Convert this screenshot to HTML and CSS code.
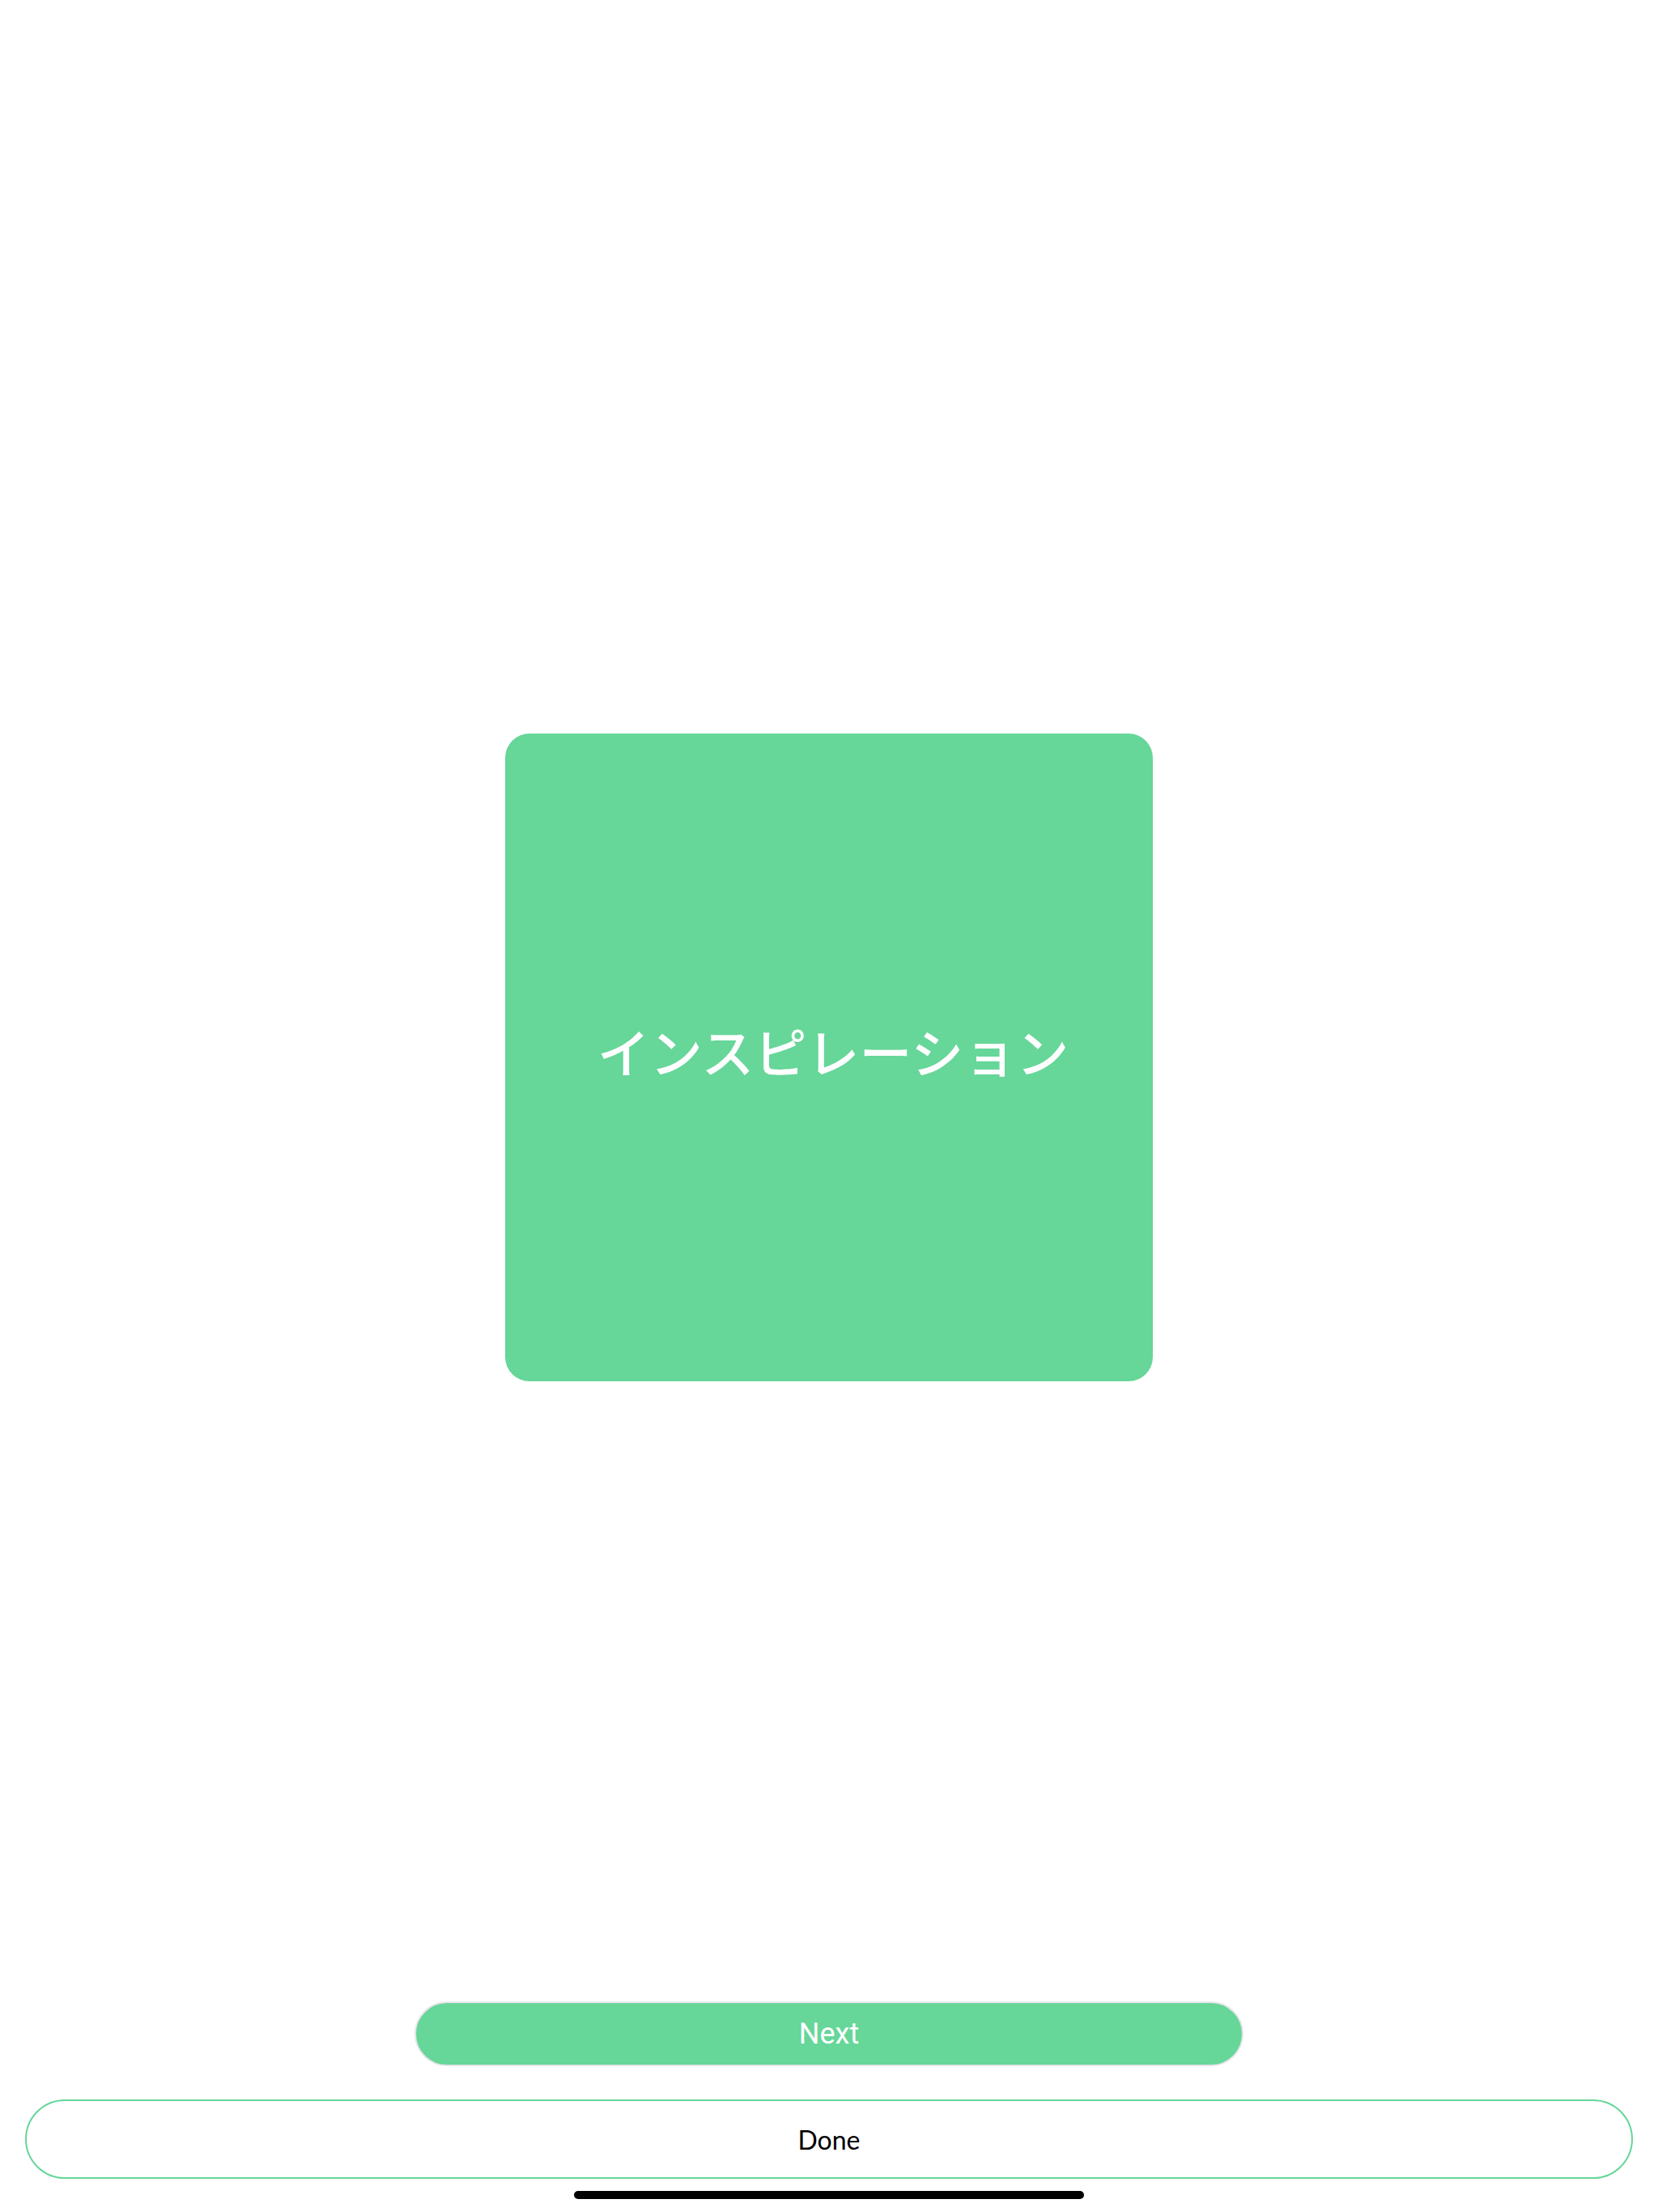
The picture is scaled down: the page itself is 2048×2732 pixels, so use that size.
FILE: index.html
```html
<!DOCTYPE html>
<html lang="ja">
<head>
<meta charset="utf-8">
<title>Inspiration</title>
<link rel="stylesheet" href="styles.css">
</head>
<body>
<div class="page">
  <main class="stage">
    <div class="card"><span class="card-title">インスピレーション</span></div>
  </main>
  <div class="actions">
    <button class="btn-next" type="button">Next</button>
    <button class="btn-done" type="button">Done</button>
    <div class="home-indicator"></div>
  </div>
</div>
</body>
</html>
```
FILE: styles.css
```css
html, body {
  margin: 0;
  padding: 0;
  background: #ffffff;
}
.page {
  width: 2048px;
  height: 2732px;
  display: flex;
  flex-direction: column;
  align-items: center;
  box-sizing: border-box;
}
.stage {
  padding-top: 906px;
  display: flex;
  justify-content: center;
}
.card {
  width: 800px;
  height: 800px;
  border-radius: 30px;
  background: #66d699;
  display: flex;
  align-items: center;
  justify-content: center;
}
.card-title {
  color: #ffffff;
  font-family: "Noto Sans CJK JP", sans-serif;
  font-size: 65px;
  font-weight: 500;
  line-height: 1;
  margin-bottom: 18px;
  padding-left: 10px;
}
.actions {
  margin-top: 766px;
  width: 100%;
  display: flex;
  flex-direction: column;
  align-items: center;
}
.btn-next {
  width: 1024px;
  height: 80px;
  box-sizing: border-box;
  border: 2px solid #e6e4ea;
  border-radius: 40px;
  background: #66d699;
  color: #ffffff;
  font-family: Roboto, "Liberation Sans", sans-serif;
  font-size: 36px;
  font-weight: 400;
  padding: 0;
  display: flex;
  align-items: center;
  justify-content: center;
}
.btn-done {
  margin-top: 41px;
  width: 1986px;
  height: 98px;
  box-sizing: border-box;
  border: 2px solid #66d699;
  border-radius: 49px;
  background: #ffffff;
  color: #000000;
  font-family: Lato, "Noto Sans", sans-serif;
  font-size: 32px;
  font-weight: 400;
  padding: 0;
  display: flex;
  align-items: center;
  justify-content: center;
}
.home-indicator {
  margin-top: 15px;
  width: 630px;
  height: 10px;
  border-radius: 5px;
  background: #000000;
}
```
